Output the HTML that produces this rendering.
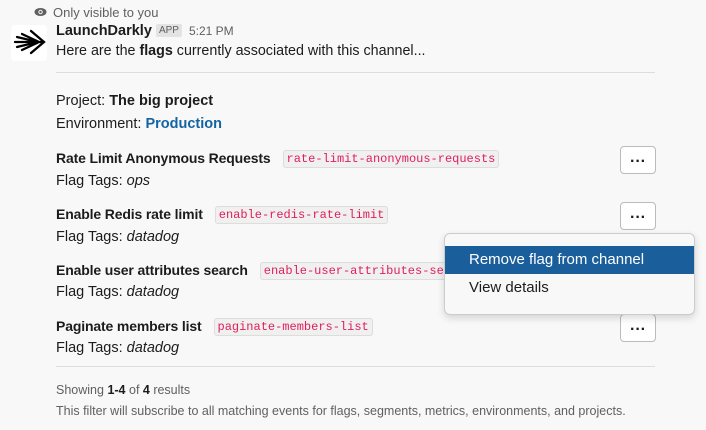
<!DOCTYPE html><html><head><style>
body{margin:0;width:706px;height:430px;background:#f8f8f8;font-family:"Liberation Sans",sans-serif;color:#1d1c1d;position:relative;overflow:hidden;font-size:14.5px}
.a{position:absolute;white-space:nowrap}
b{font-weight:bold}
.n{font-size:14px;letter-spacing:-0.15px}
code{font-family:"Liberation Mono",monospace;font-size:12px;color:#e01e5a;background:#f0f0f0;border:1px solid #ddd;border-radius:3px;padding:1px 3px;margin-left:8px;position:relative;top:-1px}
.btn{position:absolute;left:620px;width:34px;height:26px;border:1px solid #bbb;border-radius:4px;background:#fff;text-align:center;font-weight:bold;font-size:16px;line-height:30px;overflow:hidden}
.g{color:#616061}
i{font-style:italic}
</style></head><body>
<div class="a g" style="left:34px;top:5px;font-size:13px"><svg width="13" height="10" viewBox="0 0 13 10" style="margin-right:6px"><ellipse cx="6.5" cy="5" rx="6" ry="4" fill="#616061"/><circle cx="6.5" cy="5" r="2.2" fill="#f8f8f8"/><circle cx="6.5" cy="5" r="1.2" fill="#616061"/></svg>Only visible to you</div>
<div class="a" style="left:11px;top:25px;width:36px;height:36px;background:#fff;border-radius:4px"><svg width="36" height="36" viewBox="0 0 36 36"><g stroke="#000" stroke-width="2.3" fill="none" stroke-linecap="round"><path d="M4 17H33M20 6L33 17L20 28M11 9L28 17L11 25M6 12L27 17L6 22"/></g></svg></div>
<div class="a" style="left:56px;top:23px;font-size:14.5px"><b>LaunchDarkly</b> <span style="background:#e3e3e3;color:#616061;font-size:10px;padding:1px 3px;border-radius:2px;position:relative;top:-2px">APP</span> <span class="g" style="font-size:12px;margin-left:3px">5:21 PM</span></div>
<div class="a" style="left:56px;top:43px;font-size:14.3px">Here are the <b>flags</b> currently associated with this channel...</div>
<div class="a" style="left:56px;top:72px;width:599px;height:1px;background:#ddd"></div>
<div class="a" style="left:56px;top:93px">Project: <b>The big project</b></div>
<div class="a" style="left:56px;top:116px">Environment: <b style="color:#1264a3">Production</b></div>
<div class="a" style="left:56px;top:150px"><b class="n">Rate Limit Anonymous Requests</b> <code>rate-limit-anonymous-requests</code></div>
<div class="a" style="left:56px;top:173px">Flag Tags: <i>ops</i></div>
<div class="btn" style="top:146px">···</div>
<div class="a" style="left:56px;top:206px"><b class="n">Enable Redis rate limit</b> <code>enable-redis-rate-limit</code></div>
<div class="a" style="left:56px;top:229px">Flag Tags: <i>datadog</i></div>
<div class="btn" style="top:202px">···</div>
<div class="a" style="left:56px;top:262px"><b class="n">Enable user attributes search</b> <code>enable-user-attributes-search</code></div>
<div class="a" style="left:56px;top:284px">Flag Tags: <i>datadog</i></div>
<div class="a" style="left:56px;top:318px"><b class="n">Paginate members list</b> <code>paginate-members-list</code></div>
<div class="a" style="left:56px;top:340px">Flag Tags: <i>datadog</i></div>
<div class="btn" style="top:314px">···</div>
<div class="a" style="left:56px;top:366px;width:599px;height:1px;background:#ddd"></div>
<div class="a g" style="left:56px;top:383px;font-size:12.5px">Showing <b style="color:#1d1c1d">1-4</b> of <b style="color:#1d1c1d">4</b> results</div>
<div class="a g" style="left:56px;top:404px;font-size:12.5px">This filter will subscribe to all matching events for flags, segments, metrics, environments, and projects.</div>
<div class="a" style="left:444px;top:233px;width:249px;height:80px;background:#f8f8f8;border:1px solid #ccc;border-radius:6px;box-shadow:0 3px 8px rgba(0,0,0,.15);font-size:15px">
<div style="position:absolute;left:0;right:0;top:12px;height:28px;background:#1a5f9c;color:#fff;padding-left:24px;line-height:28px">Remove flag from channel</div>
<div style="position:absolute;left:24px;top:40px;line-height:28px">View details</div>
</div>
</body></html>
